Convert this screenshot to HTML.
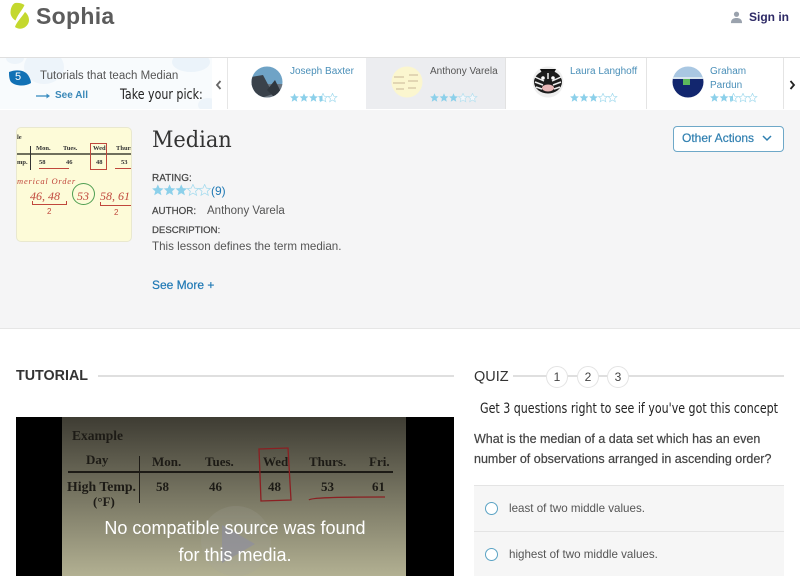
<!DOCTYPE html>
<html><head><meta charset="utf-8">
<style>
html,body{margin:0;padding:0}
body{width:800px;height:576px;overflow:hidden;position:relative;background:#fff;font-family:"Liberation Sans",sans-serif;color:#444}
div,span,a,svg{position:absolute;white-space:nowrap}
.t{line-height:1}
.hand{font-family:"DejaVu Sans",sans-serif;color:#222;transform-origin:0 0}
.name{font-size:10px;color:#4a8fb8;line-height:14px}
.lbl{font-size:10px;color:#444;-webkit-text-stroke:.2px #444}
.th{font:bold 6.500px 'Liberation Serif',serif;color:#333}
.vt{font:bold 13px 'Liberation Serif',serif;color:#1d1b16}
.rd{font:italic 12px 'Liberation Serif',serif;color:#c0473c}
</style></head><body>

<!-- logo -->
<svg style="left:0;top:0" width="34" height="32" viewBox="0 0 34 32"><path d="M15 3C18 2.500 22 3 24.500 5C23 9 18 14 15.500 20.500C13 19 10.500 16 10.500 12.500C10.500 8.500 12 4.500 15 3Z" fill="#c4d82e"/><path d="M25 12C27.500 14 29 17 29 20C29 24 26 27.500 22 28.500C19.500 29 17 28.500 15 27C16.500 22 21.500 17.500 25 12Z" fill="#c4d82e"/></svg>
<div class="t" style="left:36px;top:5px;font-size:23px;font-weight:bold;color:#5c5c5c;letter-spacing:.3px">Sophia</div>

<!-- sign in -->
<svg style="left:730px;top:11px" width="13" height="13" viewBox="0 0 14 14"><circle cx="7" cy="3.500" r="2.800" fill="#9aa2ad"/><path d="M1 13C1 8.500 4 7.500 7 7.500C10 7.500 13 8.500 13 13Z" fill="#9aa2ad"/></svg>
<div class="t" style="left:749px;top:11px;font-size:12px;font-weight:bold;color:#2e2a66">Sign in</div>

<!-- carousel band -->
<div style="left:0;top:57px;width:800px;height:52px;background:#fff;border-top:1px solid #dfdfdf;border-bottom:1px solid #dcdcdc"></div>
<div style="left:0;top:110px;width:800px;height:218px;background:#f5f5f6;border-bottom:1px solid #e6e6e6"></div>

<div style="left:0;top:58px;width:212px;height:51px;background:#f8fbfd;overflow:hidden">
 <div style="left:6px;top:-6px;width:18px;height:12px;border-radius:50%;background:#edf4fa"></div>
 <div style="left:24px;top:-8px;width:40px;height:34px;border-radius:50%;background:#edf4fa"></div>
 <div style="left:172px;top:-6px;width:38px;height:20px;border-radius:50%;background:#ebf3fa"></div>
 <div style="left:198px;top:40px;width:20px;height:14px;border-radius:50%;background:#edf4fa"></div>
</div>
<svg style="left:8px;top:69px" width="24" height="18" viewBox="0 0 24 18"><path d="M1 3C8 0 17 1 20 6C22 9 23 12 23 14C17 18 7 17 3 13C1 10 1 6 1 3Z" fill="#1271b5"/></svg>
<div class="t" style="left:15px;top:72px;font-size:11px;color:#fff">5</div>
<div class="t" style="left:40px;top:71px;font-size:11.500px;color:#555">Tutorials that teach Median</div>
<svg style="left:36px;top:92px" width="15" height="8" viewBox="0 0 15 8"><path d="M0 4H12" stroke="#3a8cc0" stroke-width="1.300"/><path d="M10.500 1.500L14 4L10.500 6.500Z" fill="#3a8cc0"/></svg>
<div class="t" style="left:55px;top:91px;font-size:10px;font-weight:bold;color:#3a88b8">See All</div>
<div class="t hand" style="left:120px;top:88px;font-size:14px;transform:scaleX(.79)">Take your pick:</div>

<!-- carousel cells -->
<div style="left:212px;top:58px;width:15px;height:51px;background:#fff;border-right:1px solid #e6e6e6"></div>
<svg style="left:215px;top:80px" width="7" height="10" viewBox="0 0 7 10"><path d="M5.500 1L2 5L5.500 9" fill="none" stroke="#666" stroke-width="1.800"/></svg>

<div style="left:366px;top:58px;width:139px;height:51px;background:#ecedf0;border-right:1px solid #e2e2e2"></div>
<div style="left:646px;top:58px;width:1px;height:51px;background:#e4e4e4"></div>
<div style="left:783px;top:58px;width:1px;height:51px;background:#e4e4e4"></div>
<svg style="left:789px;top:80px" width="7" height="10" viewBox="0 0 7 10"><path d="M1.500 1L5 5L1.500 9" fill="none" stroke="#222" stroke-width="1.800"/></svg>

<!-- avatars -->
<svg style="left:251px;top:66px" width="32" height="32" viewBox="0 0 32 32"><defs><clipPath id="c1"><circle cx="16" cy="16" r="15.500"/></clipPath></defs><g clip-path="url(#c1)"><rect width="32" height="32" fill="#6fa3c6"/><rect y="18" width="32" height="14" fill="#6b747e"/><path d="M0 11L12 9L22 28L10 32H4L0 24Z" fill="#3a424b"/><path d="M16 24L24 14L30 26L24 32Z" fill="#30373e"/></g></svg>
<svg style="left:391px;top:66px" width="32" height="32" viewBox="0 0 32 32"><circle cx="16" cy="16" r="15.500" fill="#fbf6cf"/><path d="M3 11h10M18 9h9M2 17h12M17 15h10M5 23h8M17 22h8" stroke="#c9b797" stroke-width="1.100"/></svg>
<svg style="left:532px;top:66px" width="32" height="32" viewBox="0 0 32 32"><circle cx="16" cy="16" r="15.500" fill="#eee"/><path d="M8 3h16l-2 4H10Z" fill="#111"/><ellipse cx="16" cy="16" rx="14" ry="11.500" fill="#1c1c1c"/><path d="M3 11L12 15M29 11L20 15M3 16L11 19M29 16L21 19M4 21L10 23M28 21L22 23M16 7V13" stroke="#eee" stroke-width="1.500"/><circle cx="11" cy="12" r="1.800" fill="#fff"/><circle cx="21" cy="12" r="1.800" fill="#fff"/><ellipse cx="16" cy="22" rx="6" ry="3.500" fill="#e8b7b7"/></svg>
<svg style="left:672px;top:66px" width="32" height="32" viewBox="0 0 32 32"><defs><clipPath id="c4"><circle cx="16" cy="16" r="15.500"/></clipPath></defs><g clip-path="url(#c4)"><rect width="32" height="12" fill="#a9c7e2"/><rect y="12" width="32" height="20" fill="#12266e"/><rect x="11" y="13" width="7" height="6" fill="#5cb85c"/><path d="M0 12h32" stroke="#d8e5ef" stroke-width="2"/></g></svg>

<!-- names -->
<div class="name" style="left:290px;top:65px">Joseph Baxter</div>
<div class="name" style="left:430px;top:65px;color:#555">Anthony Varela</div>
<div class="name" style="left:570px;top:65px">Laura Langhoff</div>
<div class="name" style="left:710px;top:65px">Graham<br><span style="position:static">Pardun</span></div>

<!-- small stars -->
<svg width="0" height="0" style="left:0;top:0"><defs>
<path id="st" d="M4.500 0.300L5.800 3.200L8.900 3.500L6.500 5.600L7.300 8.700L4.500 7L1.700 8.700L2.500 5.600L0.100 3.500L3.200 3.200Z"/>
</defs></svg>
<svg style="left:290px;top:93px" width="48" height="10" viewBox="0 0 48 10"><g fill="#8cd0ea"><use href="#st"/><use href="#st" x="9.500"/><use href="#st" x="19"/></g><use href="#st" x="28.500" fill="none" stroke="#a5dbee" stroke-width=".7"/><rect x="29.500" y="3" width="3" height="5" fill="#8cd0ea"/><use href="#st" x="38" fill="none" stroke="#a5dbee" stroke-width=".7"/></svg>
<svg style="left:430px;top:93px" width="48" height="10" viewBox="0 0 48 10"><g fill="#8cd0ea"><use href="#st"/><use href="#st" x="9.500"/><use href="#st" x="19"/></g><g fill="#f4f7fa" stroke="#b6e0ef" stroke-width=".7"><use href="#st" x="28.500"/><use href="#st" x="38"/></g></svg>
<svg style="left:570px;top:93px" width="48" height="10" viewBox="0 0 48 10"><g fill="#8cd0ea"><use href="#st"/><use href="#st" x="9.500"/><use href="#st" x="19"/></g><g fill="none" stroke="#a5dbee" stroke-width=".7"><use href="#st" x="28.500"/><use href="#st" x="38"/></g></svg>
<svg style="left:710px;top:93px" width="48" height="10" viewBox="0 0 48 10"><g fill="#8cd0ea"><use href="#st"/><use href="#st" x="9.500"/></g><rect x="20" y="3" width="3" height="5" fill="#8cd0ea"/><g fill="none" stroke="#a5dbee" stroke-width=".7"><use href="#st" x="19"/><use href="#st" x="28.500"/><use href="#st" x="38"/></g></svg>

<!-- thumbnail -->
<div style="left:16px;top:127px;width:116px;height:115px;background:#fdfbd8;border-radius:5px;border:1px solid #e9e8cf;box-sizing:border-box;overflow:hidden">
 <div style="left:0;top:25px;width:116px;height:2px;background:#6f6f5c"></div>
 <div style="left:13px;top:18px;width:1px;height:24px;background:#333"></div>
 <div class="t th" style="left:0;top:6px">le</div>
 <div class="t th" style="left:19px;top:17px">Mon.</div>
 <div class="t th" style="left:46px;top:17px">Tues.</div>
 <div class="t th" style="left:76px;top:17px">Wed</div>
 <div class="t th" style="left:99px;top:17px">Thurs</div>
 <div class="t th" style="left:0;top:31px">mp.</div>
 <div class="t th" style="left:22px;top:31px">58</div>
 <div class="t th" style="left:49px;top:31px">46</div>
 <div class="t th" style="left:79px;top:31px">48</div>
 <div class="t th" style="left:104px;top:31px">53</div>
 <div style="left:73px;top:15px;width:15px;height:25px;border:1px solid #c0473c"></div>
 <div style="left:22px;top:40px;width:30px;height:1px;background:#c0473c"></div>
 <div style="left:98px;top:40px;width:18px;height:1px;background:#c0473c"></div>
 <div class="t" style="left:0;top:48px;font:italic 8.500px 'Liberation Serif',serif;color:#c0473c;letter-spacing:.8px">merical Order</div>
 <div class="t rd" style="left:13px;top:61px">46, 48</div>
 <div class="t rd" style="left:60px;top:61px">53</div>
 <div class="t rd" style="left:83px;top:61px">58, 61</div>
 <div style="left:55px;top:55px;width:21px;height:20px;border:1px solid #4f9e52;border-radius:50%"></div>
 <div style="left:15px;top:73px;width:33px;height:3px;border:1px solid #c0473c;border-top:0"></div>
 <div style="left:83px;top:74px;width:33px;height:3px;border:1px solid #c0473c;border-top:0;border-right:0"></div>
 <div class="t" style="left:30px;top:79px;font:8px 'Liberation Sans';color:#c0473c">2</div>
 <div class="t" style="left:97px;top:80px;font:8px 'Liberation Sans';color:#c0473c">2</div>
</div>

<!-- title & meta -->
<div class="t" style="left:152px;top:128px;font:22px 'DejaVu Serif','Liberation Serif',serif;color:#333;transform:scaleX(.95);transform-origin:0 0">Median</div>
<div class="t lbl" style="left:152px;top:174px">RATING:</div>
<svg style="left:152px;top:184px" width="60" height="13" viewBox="0 0 60 13"><g transform="scale(1.300)"><g fill="#8cd0ea"><use href="#st"/><use href="#st" x="9"/><use href="#st" x="18"/></g><g fill="none" stroke="#a5dbee" stroke-width=".6"><use href="#st" x="27"/><use href="#st" x="36"/></g></g></svg>
<div class="t" style="left:211px;top:185px;font-size:12px;color:#1e78b4">(9)</div>
<div class="t lbl" style="left:152px;top:207px;font-size:9.800px">AUTHOR:</div>
<div class="t" style="left:207px;top:206px;font-size:11.500px;color:#555">Anthony Varela</div>
<div class="t lbl" style="left:152px;top:226px;font-size:9.600px">DESCRIPTION:</div>
<div class="t" style="left:152px;top:241px;font-size:11.600px;color:#555">This lesson defines the term median.</div>
<div class="t" style="left:152px;top:279px;font-size:12px;color:#1e78b4;-webkit-text-stroke:.2px #1e78b4">See More +</div>

<!-- other actions -->
<div style="left:673px;top:126px;width:111px;height:26px;box-sizing:border-box;background:#fff;border:1px solid #6ea8c8;border-radius:4px"></div>
<div class="t" style="left:682px;top:132px;font-size:12px;color:#2f7fb0;-webkit-text-stroke:.2px #2f7fb0">Other Actions</div>
<svg style="left:762px;top:135px" width="10" height="7" viewBox="0 0 10 7"><path d="M1 1L5 5L9 1" fill="none" stroke="#2f7fb0" stroke-width="1.500"/></svg>

<!-- tutorial -->
<div class="t" style="left:16px;top:369px;font-size:14.300px;font-weight:bold;color:#333">TUTORIAL</div>
<div style="left:98px;top:375px;width:356px;height:2px;background:#dfdfdf"></div>

<!-- video -->
<div style="left:16px;top:417px;width:438px;height:159px;background:#000"></div>
<div style="left:62px;top:417px;width:344px;height:159px;background:linear-gradient(#3e3c33,#b2b092)"></div>
<div class="t" style="left:72px;top:428px;font:bold 13.500px 'Liberation Serif',serif;color:#1d1b16">Example</div>
<div class="t vt" style="left:86px;top:452px">Day</div>
<div class="t vt" style="left:152px;top:454px">Mon.</div>
<div class="t vt" style="left:205px;top:454px">Tues.</div>
<div class="t vt" style="left:263px;top:454px">Wed</div>
<div class="t vt" style="left:309px;top:454px">Thurs.</div>
<div class="t vt" style="left:369px;top:454px">Fri.</div>
<div style="left:68px;top:471px;width:325px;height:2px;background:#1d1b16"></div>
<div style="left:139px;top:456px;width:1px;height:47px;background:#1d1b16"></div>
<div class="t vt" style="left:67px;top:479px;font-size:13.800px">High Temp.</div>
<div class="t vt" style="left:93px;top:494px">(°F)</div>
<div class="t vt" style="left:156px;top:479px">58</div>
<div class="t vt" style="left:209px;top:479px">46</div>
<div class="t vt" style="left:268px;top:479px">48</div>
<div class="t vt" style="left:321px;top:479px">53</div>
<div class="t vt" style="left:372px;top:479px">61</div>
<svg style="left:255px;top:445px" width="145" height="60" viewBox="0 0 145 60"><path d="M4 4L33 3L36 55L6 56Z" fill="none" stroke="#8b1f22" stroke-width="1.300"/><path d="M54 55C56 52 100 52 130 52" fill="none" stroke="#8b1f22" stroke-width="1.300"/></svg>
<svg style="left:200px;top:503px" width="72" height="73" viewBox="0 0 72 73"><circle cx="36" cy="38" r="35" fill="#a8a8a0" fill-opacity=".18"/><path d="M22 22L55 41L22 60Z" fill="#8f8f9c" fill-opacity=".7"/></svg>
<div class="t" style="left:16px;top:515px;width:438px;text-align:center;font-size:18px;line-height:27px;color:#fff;white-space:normal">No compatible source was found<br><span style="position:static">for this media.</span></div>

<!-- quiz -->
<div class="t" style="left:474px;top:370px;font-size:14.500px;color:#333">QUIZ</div>
<div style="left:513px;top:375px;width:271px;height:2px;background:#dfdfdf"></div>
<div class="t" style="left:546px;top:366px;width:22px;height:22px;box-sizing:border-box;border-radius:50%;background:#fff;border:1px solid #e4e4e4;text-align:center;line-height:20px;font-size:12px;color:#444">1</div>
<div class="t" style="left:577px;top:366px;width:22px;height:22px;box-sizing:border-box;border-radius:50%;background:#fff;border:1px solid #e4e4e4;text-align:center;line-height:20px;font-size:12px;color:#444">2</div>
<div class="t" style="left:607px;top:366px;width:22px;height:22px;box-sizing:border-box;border-radius:50%;background:#fff;border:1px solid #e4e4e4;text-align:center;line-height:20px;font-size:12px;color:#444">3</div>
<div class="t hand" style="left:480px;top:402px;font-size:14px;transform:scaleX(.79)">Get 3 questions right to see if you've got this concept</div>
<div style="left:474px;top:429px;font-size:12.500px;line-height:20px;color:#444;-webkit-text-stroke:.2px #444">What is the median of a data set which has an even<br><span style="position:static">number of observations arranged in ascending order?</span></div>

<div style="left:474px;top:485px;width:310px;height:91px;background:#f6f6f6"></div>
<div style="left:474px;top:485px;width:310px;height:1px;background:#e4e4e4"></div>
<div style="left:474px;top:531px;width:310px;height:1px;background:#e4e4e4"></div>
<div style="left:485px;top:502px;width:13px;height:13px;box-sizing:border-box;border-radius:50%;border:1.500px solid #5ba3c4;background:#fff"></div>
<div style="left:485px;top:548px;width:13px;height:13px;box-sizing:border-box;border-radius:50%;border:1.500px solid #5ba3c4;background:#fff"></div>
<div class="t" style="left:509px;top:503px;font-size:11.600px;color:#555">least of two middle values.</div>
<div class="t" style="left:509px;top:549px;font-size:11.600px;color:#555">highest of two middle values.</div>

</body></html>
